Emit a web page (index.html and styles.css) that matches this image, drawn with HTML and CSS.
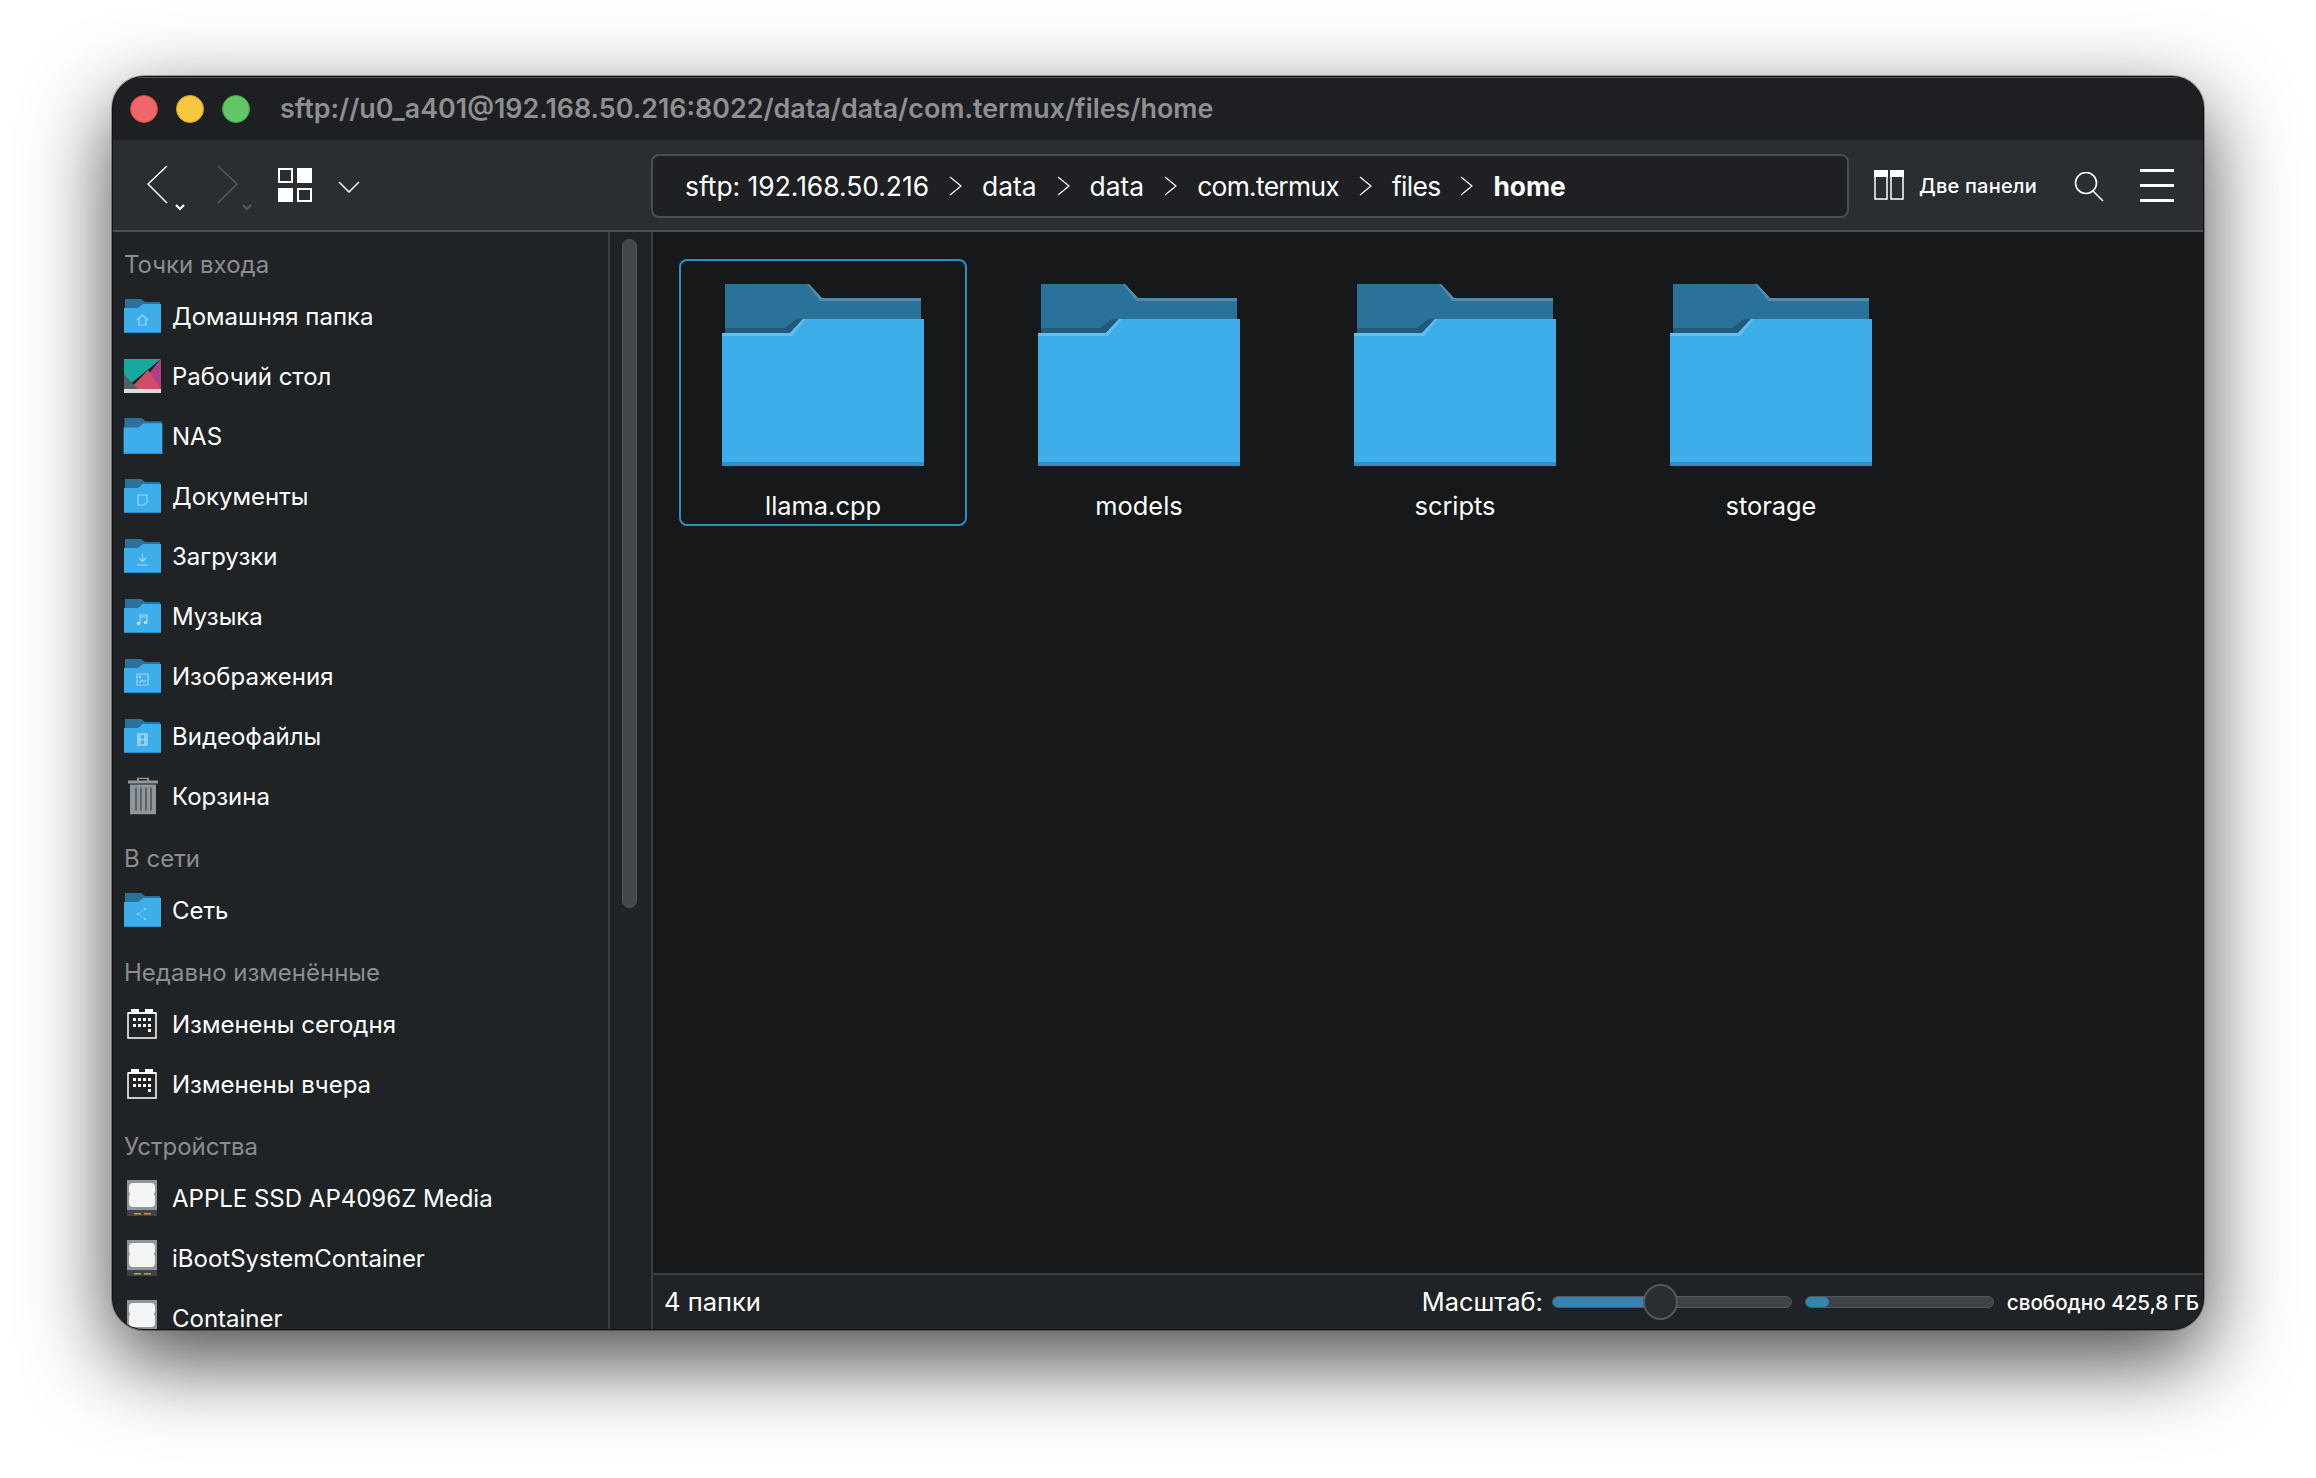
FILE: index.html
```html
<!DOCTYPE html>
<html lang="en">
<head>
    <meta charset="UTF-8">
    <title>sftp://u0_a401@192.168.50.216:8022/data/data/com.termux/files/home</title>
    <link rel="stylesheet" href="styles.css">
</head>
<body>

    <!-- Shared icon shapes -->
    <svg class="defs" width="0" height="0">
        <symbol id="folder-big" viewBox="0 0 202 182">
            <path fill="#2a7299" d="M3 0H87L100 14H199V60H3Z"/>
            <path fill="#4b8cb0" d="M87 0L100 14H199V17H98L85 0Z"/>
            <path fill="#215a7b" d="M3 44H62L74 35H81V49H3Z"/>
            <path fill="#3daee9" d="M0 49H68L81 35H202V182H0Z"/>
            <path fill="#63bdee" d="M0 49H68L81 35H84L70 52H0Z"/>
            <path fill="#2f8fc4" d="M0 178H202V182H0Z"/>
        </symbol>
        <symbol id="folder-small" viewBox="0 0 37 34">
            <path fill="#2a7299" d="M1 0H17L21 3H36V12H1Z"/>
            <path fill="#3daee9" d="M0 9H14L19 5H37V34H0Z"/>
            <path fill="#2f8fc4" d="M0 33H37V34H0Z"/>
        </symbol>
        <symbol id="calendar" viewBox="0 0 30 30">
            <path fill="none" stroke="#fff" stroke-width="1.5" d="M1 4H29V29H1Z"/>
            <path fill="#fff" d="M4 0H12V3H4ZM18 0H26V3H18ZM1 3H29V5H1ZM6 9H9V12H6ZM11 9H14V12H11ZM16 9H19V12H16ZM21 9H24V12H21ZM6 15H9V18H6ZM11 15H14V18H11ZM16 15H19V18H16ZM21 15H24V18H21ZM21 20H24V23H21Z"/>
        </symbol>
        <symbol id="disk" viewBox="0 0 30 36">
            <path fill="#90969a" d="M0 0H30V36H0Z"/>
            <path fill="#f2f4f6" d="M6 3H24Q28 3 28 7V12Q26 14 28 16V23Q28 27 24 27H6Q2 27 2 23V16Q4 14 2 12V7Q2 3 6 3Z"/>
            <path fill="#3e4347" d="M0 30H30V36H0Z"/>
            <path fill="#d9952f" d="M7 33H14V34.500H7ZM17 33H24V34.500H17Z"/>
        </symbol>
    </svg>

    <div class="window">
        <div class="titlebar">
            <span class="light light-red"></span>
            <span class="light light-yellow"></span>
            <span class="light light-green"></span>
            <span class="title">sftp://u0_a401@192.168.50.216:8022/data/data/com.termux/files/home</span>
        </div>

        <div class="toolbar">
            <svg class="nav-icon" width="44" height="52" viewBox="0 0 44 52">
                <path fill="none" stroke="#fff" stroke-width="1.5" d="M20 1L1 19L20 38"/>
                <path fill="none" stroke="#fff" stroke-width="2" d="M29 40L33 44L37 40"/>
            </svg>
            <svg class="nav-icon nav-next" width="44" height="52" viewBox="0 0 44 52">
                <path fill="none" stroke="#55585b" stroke-width="1.5" d="M1 1L20 19L1 38"/>
                <path fill="none" stroke="#55585b" stroke-width="2" d="M26 40L30 44L34 40"/>
            </svg>
            <svg class="view-icon" width="34" height="34" viewBox="0 0 34 34">
                <path fill="none" stroke="#fff" stroke-width="2" d="M1 1H14V14H1ZM20 21H33V33H20Z"/>
                <path fill="#fff" d="M19 0H34V15H19ZM0 20H15V34H0Z"/>
            </svg>
            <svg class="view-chevron" width="22" height="12" viewBox="0 0 22 12">
                <path fill="none" stroke="#fff" stroke-width="1.5" d="M1 1L11 11L21 1"/>
            </svg>

            <div class="address">
                <span>sftp: 192.168.50.216</span>
                <svg class="crumb-sep" width="13" height="20" viewBox="0 0 13 20"><path d="M1 1L12 10L1 19"/></svg>
                <span>data</span>
                <svg class="crumb-sep" width="13" height="20" viewBox="0 0 13 20"><path d="M1 1L12 10L1 19"/></svg>
                <span>data</span>
                <svg class="crumb-sep" width="13" height="20" viewBox="0 0 13 20"><path d="M1 1L12 10L1 19"/></svg>
                <span class="crumb-tight">com.termux</span>
                <svg class="crumb-sep" width="13" height="20" viewBox="0 0 13 20"><path d="M1 1L12 10L1 19"/></svg>
                <span class="crumb-tight">files</span>
                <svg class="crumb-sep" width="13" height="20" viewBox="0 0 13 20"><path d="M1 1L12 10L1 19"/></svg>
                <span class="crumb-current">home</span>
            </div>

            <svg class="panels-icon" width="30" height="30" viewBox="0 0 30 30">
                <path fill="none" stroke="#fff" stroke-width="1.5" d="M1 1H13V29H1ZM17 1H29V29H17Z"/>
                <path fill="#fff" d="M0 0H14V7H0ZM16 0H30V7H16Z"/>
            </svg>
            <span class="panels-label">Две панели</span>
            <svg class="search-icon" width="30" height="30" viewBox="0 0 30 30">
                <circle cx="12" cy="11" r="10.5" fill="none" stroke="#fff" stroke-width="1.6"/>
                <path fill="none" stroke="#fff" stroke-width="1.6" d="M19 19L29 29"/>
            </svg>
            <div class="menu-icon"><span></span><span></span><span></span></div>
        </div>

        <div class="content">
            <div class="sidebar">
                <div class="side-head">Точки входа</div>
                <div class="side-row">
                    <svg class="side-icon" width="37" height="34" viewBox="0 0 37 34">
                        <use href="#folder-small"/>
                        <path class="glyph" d="M13 21L18.500 16L24 21M15 20V26H22V20"/>
                    </svg>
                    <span>Домашняя папка</span>
                </div>
                <div class="side-row">
                    <svg class="side-icon" width="37" height="34" viewBox="0 0 37 34">
                        <path fill="#16a99d" d="M0 0H37L0 30Z"/>
                        <path fill="#b43f86" d="M37 0V30H12Z"/>
                        <path fill="#cc4f68" d="M24 11L37 30H6Z"/>
                        <path fill="#4f6063" d="M0 15L14 30H0Z"/>
                        <path fill="#d9dcdf" d="M0 30H37V34H0Z"/>
                    </svg>
                    <span>Рабочий стол</span>
                </div>
                <div class="side-row">
                    <svg class="side-icon side-icon-nas" width="40" height="36" viewBox="0 0 37 34"><use href="#folder-small"/></svg>
                    <span>NAS</span>
                </div>
                <div class="side-row">
                    <svg class="side-icon" width="37" height="34" viewBox="0 0 37 34">
                        <use href="#folder-small"/>
                        <path class="glyph" d="M14 16H23V23L20 26H14Z"/>
                    </svg>
                    <span>Документы</span>
                </div>
                <div class="side-row">
                    <svg class="side-icon" width="37" height="34" viewBox="0 0 37 34">
                        <use href="#folder-small"/>
                        <path class="glyph" d="M18.500 15V22M15 19L18.500 22.500L22 19M13 26H24"/>
                    </svg>
                    <span>Загрузки</span>
                </div>
                <div class="side-row">
                    <svg class="side-icon" width="37" height="34" viewBox="0 0 37 34">
                        <use href="#folder-small"/>
                        <path class="glyph" d="M16 24V16H23V23M16 18H23"/>
                        <circle class="glyph-fill" cx="14.500" cy="24.500" r="1.800"/>
                        <circle class="glyph-fill" cx="21.500" cy="23.500" r="1.800"/>
                    </svg>
                    <span>Музыка</span>
                </div>
                <div class="side-row">
                    <svg class="side-icon" width="37" height="34" viewBox="0 0 37 34">
                        <use href="#folder-small"/>
                        <path class="glyph" d="M13 15H24V26H13ZM15 24L18 21L20 23L22 21"/>
                        <circle class="glyph-fill" cx="16" cy="18" r="1.200"/>
                    </svg>
                    <span>Изображения</span>
                </div>
                <div class="side-row">
                    <svg class="side-icon" width="37" height="34" viewBox="0 0 37 34">
                        <use href="#folder-small"/>
                        <path class="glyph glyph-heavy" d="M14 15H23V26H14ZM14 20.500H23M16 15V26M21 15V26"/>
                    </svg>
                    <span>Видеофайлы</span>
                </div>
                <div class="side-row">
                    <svg class="side-icon side-icon-trash" width="32" height="37" viewBox="0 0 32 37">
                        <path fill="#8f979c" d="M10 0H22V3H31V6H1V3H10ZM3 7H29V37H3Z"/>
                        <path fill="#5d6367" d="M8 10H10V33H8ZM13 10H15V33H13ZM18 10H20V33H18ZM23 10H25V33H23Z"/>
                        <path fill="#22262a" d="M12 1.500H20V3H12Z"/>
                    </svg>
                    <span>Корзина</span>
                </div>

                <div class="side-head">В сети</div>
                <div class="side-row">
                    <svg class="side-icon" width="37" height="34" viewBox="0 0 37 34">
                        <use href="#folder-small"/>
                        <circle class="glyph-fill" cx="14" cy="21" r="1"/>
                        <circle class="glyph-fill" cx="21" cy="16" r="1"/>
                        <circle class="glyph-fill" cx="21" cy="26" r="1"/>
                        <path class="glyph glyph-thin" d="M21 16L14 21L21 26"/>
                    </svg>
                    <span>Сеть</span>
                </div>

                <div class="side-head">Недавно изменённые</div>
                <div class="side-row">
                    <svg class="side-icon" width="30" height="30"><use href="#calendar"/></svg>
                    <span>Изменены сегодня</span>
                </div>
                <div class="side-row">
                    <svg class="side-icon" width="30" height="30"><use href="#calendar"/></svg>
                    <span>Изменены вчера</span>
                </div>

                <div class="side-head">Устройства</div>
                <div class="side-row">
                    <svg class="side-icon" width="30" height="36"><use href="#disk"/></svg>
                    <span>APPLE SSD AP4096Z Media</span>
                </div>
                <div class="side-row">
                    <svg class="side-icon" width="30" height="36"><use href="#disk"/></svg>
                    <span>iBootSystemContainer</span>
                </div>
                <div class="side-row">
                    <svg class="side-icon" width="30" height="36"><use href="#disk"/></svg>
                    <span>Container</span>
                </div>
            </div>

            <div class="scroll-track"><div class="scroll-thumb"></div></div>

            <div class="main">
                <div class="files">
                    <div class="file file-selected">
                        <svg width="202" height="182"><use href="#folder-big"/></svg>
                        <span>llama.cpp</span>
                    </div>
                    <div class="file">
                        <svg width="202" height="182"><use href="#folder-big"/></svg>
                        <span>models</span>
                    </div>
                    <div class="file">
                        <svg width="202" height="182"><use href="#folder-big"/></svg>
                        <span>scripts</span>
                    </div>
                    <div class="file">
                        <svg width="202" height="182"><use href="#folder-big"/></svg>
                        <span>storage</span>
                    </div>
                </div>

                <div class="statusbar">
                    <span class="status-count">4 папки</span>
                    <span class="zoom-label">Масштаб:</span>
                    <div class="slider slider-zoom">
                        <div class="slider-fill" style="width: 106px"></div>
                        <div class="slider-thumb"></div>
                    </div>
                    <div class="slider slider-space">
                        <div class="slider-fill" style="width: 23px"></div>
                    </div>
                    <span class="free-label">свободно 425,8 ГБ</span>
                </div>
            </div>
        </div>
    </div>

</body>
</html>
```

FILE: styles.css
```css
body {
    margin: 0;
    padding: 76px 112px 0;
    height: 1478px;
    box-sizing: border-box;
    overflow: hidden;
    background-color: white;
    font-family: 'Inter', 'Liberation Sans', sans-serif;
    color: white;
}

.defs {
    display: block;
    position: absolute;
}

/* Window frame */
.window {
    width: 2092px;
    height: 1254px;
    box-sizing: border-box;
    display: flex;
    flex-direction: column;
    overflow: hidden;
    border-radius: 32px;
    background-color: #202326;
    border: 1px solid #111;
    box-shadow: 0 30px 85px 0 rgba(0, 0, 0, 0.72), 0 0 0 1px rgba(0, 0, 0, 0.3);
}

/* Title bar */
.titlebar {
    height: 62px;
    flex: none;
    display: flex;
    align-items: center;
    padding-left: 17px;
    background-color: #1e1f22;
    border-top: 1px solid #55575a;
}

.light {
    width: 28px;
    height: 28px;
    border-radius: 50%;
    margin-right: 18px;
    box-sizing: border-box;
}

.light-red {
    background-color: #ef6669;
    border: 1px solid #d9403f;
}

.light-yellow {
    background-color: #f4c93f;
    border: 1px solid #d8a021;
}

.light-green {
    background-color: #62c566;
    border: 1px solid #3aa83f;
}

.title {
    margin-left: 12px;
    padding-bottom: 2px;
    font-size: 26.85px;
    font-weight: 600;
    color: #8e8f91;
}

/* Toolbar */
.toolbar {
    height: 92px;
    flex: none;
    box-sizing: border-box;
    display: flex;
    align-items: center;
    background-color: #2a2d32;
    border-bottom: 2px solid #4b4e51;
    padding-left: 34px;
}

.nav-icon {
    margin-top: 12px;
    margin-right: 26px;
}

.nav-next {
    margin-right: 17px;
}

.view-chevron {
    margin-left: 26px;
    margin-top: 3px;
}

.address {
    width: 1198px;
    height: 64px;
    box-sizing: border-box;
    margin: 1px 0 0 291px;
    padding: 1px 0 0 32px;
    display: flex;
    align-items: center;
    gap: 20px;
    font-size: 26.4px;
    background-color: #1e2024;
    border: 2px solid #4b4e51;
    border-radius: 8px;
}

.crumb-sep {
    fill: none;
    stroke: white;
    stroke-width: 1.2;
}

.crumb-tight {
    letter-spacing: -0.7px;
}

.crumb-current {
    font-weight: 700;
}

.panels-icon {
    margin-left: 25px;
}

.panels-label {
    margin-left: 15px;
    padding-top: 2px;
    font-size: 20px;
    font-weight: 500;
    letter-spacing: 0.2px;
}

.search-icon {
    margin-left: 37px;
    margin-top: 4px;
}

.menu-icon {
    margin-left: 36px;
    width: 34px;
    display: flex;
    flex-direction: column;
    gap: 12px;
}

.menu-icon span {
    display: block;
    height: 3px;
    background-color: white;
}

/* Main split */
.content {
    flex: 1;
    min-height: 0;
    display: flex;
}

.sidebar {
    width: 497px;
    flex: none;
    box-sizing: border-box;
    padding: 0 11px;
    overflow: hidden;
    background-color: #202326;
    border-right: 2px solid #3b3e41;
}

.side-head {
    height: 54px;
    box-sizing: border-box;
    padding-top: 10px;
    display: flex;
    align-items: center;
    font-size: 24px;
    color: #8b8d8f;
}

.side-row {
    height: 60px;
    display: flex;
    align-items: center;
    font-size: 24px;
    position: relative;
    padding-left: 48px;
}

.side-icon {
    position: absolute;
    left: 0;
    top: 50%;
    transform: translateY(-50%);
    margin-left: 3px;
}

.side-icon[width="37"] {
    margin-left: 0;
}

.side-icon[width="30"] {
    margin-left: 3px;
}

.side-icon-nas {
    margin-left: -1px;
}

.glyph {
    fill: none;
    stroke: #9ed6f5;
    stroke-width: 1.2;
}

.glyph-heavy {
    stroke-width: 1.6;
}

.glyph-thin {
    stroke-width: 0.5;
}

.glyph-fill {
    fill: #b3e0f8;
}

.scroll-track {
    width: 43px;
    flex: none;
    box-sizing: border-box;
    padding: 7px 0 0 12px;
    background-color: #202326;
    border-right: 2px solid #3b3e41;
}

.scroll-thumb {
    width: 15px;
    height: 669px;
    box-sizing: border-box;
    border: 1px solid #55585b;
    border-radius: 8px;
    background-color: #43474a;
}

.main {
    flex: 1;
    min-width: 0;
    display: flex;
    flex-direction: column;
    background-color: #16181a;
}

/* File grid */
.files {
    flex: 1;
    display: flex;
    align-items: flex-start;
    gap: 28px;
    padding: 27px 0 0 26px;
}

.file {
    width: 288px;
    height: 267px;
    box-sizing: border-box;
    padding-top: 23px;
    display: flex;
    flex-direction: column;
    align-items: center;
    border: 2px solid transparent;
    border-radius: 8px;
    font-size: 25.4px;
}

.file span {
    margin-top: 24px;
}

.file-selected {
    border-color: #2b8ec4;
}

/* Status bar */
.statusbar {
    height: 56px;
    flex: none;
    box-sizing: border-box;
    display: flex;
    align-items: center;
    padding-left: 11px;
    background-color: #202326;
    border-top: 2px solid #3b3e41;
}

.status-count {
    font-size: 25.5px;
    margin-right: auto;
    padding-bottom: 2px;
}

.zoom-label {
    font-size: 25.4px;
    margin-right: 9px;
    padding-bottom: 1px;
}

.slider {
    height: 12px;
    box-sizing: border-box;
    position: relative;
    background-color: #3f4347;
    border: 1px solid #55585b;
    border-radius: 6px;
}

.slider-zoom {
    width: 240px;
}

.slider-space {
    width: 189px;
    margin-left: 13px;
}

.slider-fill {
    height: 100%;
    background-color: #3584b4;
    border-radius: 6px;
}

.slider-thumb {
    position: absolute;
    left: 90px;
    top: -13px;
    width: 35px;
    height: 36px;
    box-sizing: border-box;
    background-color: #2a2d32;
    border: 2px solid #55585b;
    border-radius: 50%;
}

.free-label {
    margin-left: 13px;
    margin-right: 4px;
    font-size: 20.6px;
    font-weight: 500;
}
```
